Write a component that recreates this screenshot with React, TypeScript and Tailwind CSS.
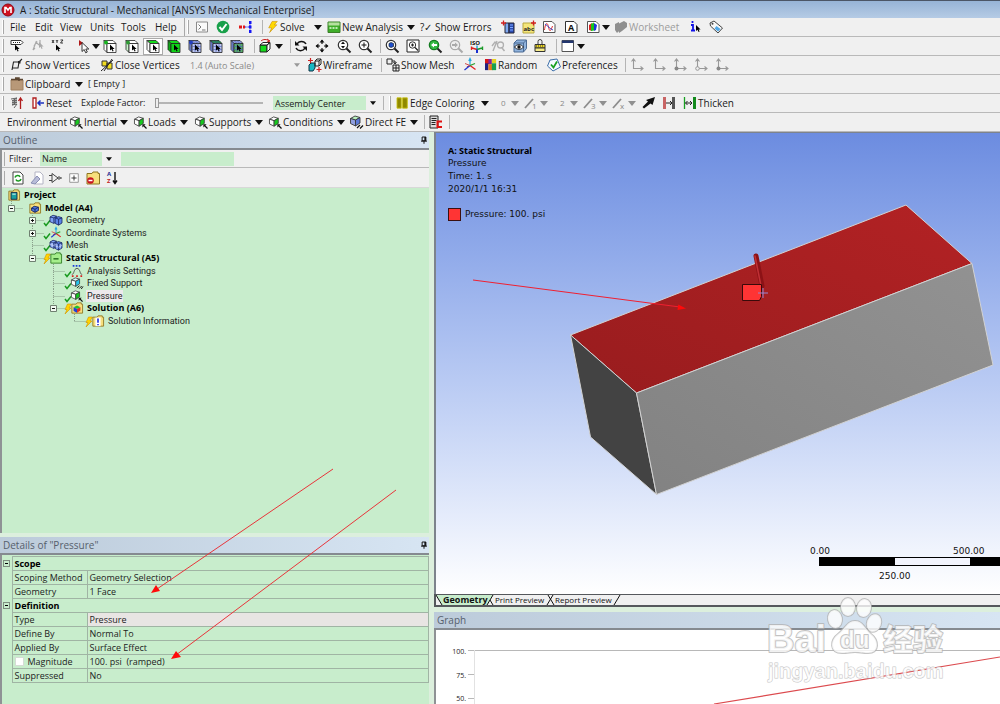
import React from 'react';

type IconProps = { children: React.ReactNode; className?: string };

function Icon({ children, className = 'h-3.5 w-3.5' }: IconProps) {
  return (
    <svg viewBox="0 0 14 14" className={`${className} shrink-0 overflow-visible`} fill="none" aria-hidden="true">
      {children}
    </svg>
  );
}

type BtnProps = { className: string; label?: string; children?: React.ReactNode };

function Btn({ className, label, children }: BtnProps) {
  return (
    <button type="button" aria-label={label} className={`flex h-4 shrink-0 items-center gap-px text-left ${className}`}>
      {children}
    </button>
  );
}

function Drop({ className = 'w-[15px]', gray = false }: { className?: string; gray?: boolean }) {
  return (
    <button type="button" aria-label="More options" className={`flex h-4 shrink-0 items-center pl-0.5 ${className}`}>
      <svg viewBox="0 0 8 5" className="h-[5px] w-2" aria-hidden="true">
        <path d="M0 0h8L4 5z" fill={gray ? '#909090' : '#111'} />
      </svg>
    </button>
  );
}

function Grip() {
  return (
    <div className="flex w-2.5 shrink-0 pl-0.5">
      <div className="h-3.5 w-0.5 border-r border-[#a8a8a8] bg-white" />
    </div>
  );
}

function Sep({ className = 'w-2.5' }: { className?: string }) {
  return (
    <div className={`flex shrink-0 justify-center ${className}`}>
      <div className="h-3.5 w-px bg-[#b4b4b4]" />
    </div>
  );
}

function Bar({ children }: { children: React.ReactNode }) {
  return (
    <div className="flex h-[19px] shrink-0 items-center overflow-hidden border-b border-[#b9b9b9] bg-[#f0f0f0] whitespace-nowrap">
      {children}
    </div>
  );
}

/* ---------- icons ---------- */

const Cursor = ({ x = 6, y = 5, fill = '#000' }) => (
  <path transform={`translate(${x} ${y})`} d="M0 0v6l1.500-1.200L2.600 7l1-.5L2.600 4.400h2z" fill={fill} />
);

const Bolt = ({ className }: { className?: string }) => (
  <Icon className={className}>
    <path d="M6 .5h6L8.500 4.500h3L3 13.500 5.500 8H2z" fill="#ffd900" stroke="#c98d00" strokeWidth=".7" />
  </Icon>
);

type SelectCubeProps = { top?: string; front?: string; side?: string; dot?: string; mesh?: boolean };

function SelectCube({ top = '#fff', front = '#fff', side = '#fff', dot, mesh = false }: SelectCubeProps) {
  return (
    <Icon>
      <g stroke="#222" strokeWidth=".8">
        <path d="M1 1.500h9l3 3H4z" fill={top} />
        <path d="M1 1.500l3 3v9l-3-3z" fill={side} />
        <path d="M4 4.500h9v9H4z" fill={front} />
      </g>
      {mesh && (
        <path d="M4 7.500h9M4 10.500h9M7 4.500v9M10 4.500v9M2.500 3v9M2.500 3h9M4 1.500l3 3M7 1.500l3 3" stroke="#4a5cb0" strokeWidth=".6" />
      )}
      {dot && <circle cx="3" cy="3.500" r="2" fill={dot} />}
      <Cursor x={7} y={5.500} />
    </Icon>
  );
}

const IsoCube = ({ left = '#fff', right = '#16c81e', top = '#fff', stroke = '#3a3a3a' }) => (
  <g stroke={stroke} strokeWidth=".9" strokeLinejoin="round">
    <path d="M.500 3.500L5 1l5 1.500-4.500 2.500z" fill={top} />
    <path d="M.500 3.500l5 1.500v6l-5-2.500z" fill={left} />
    <path d="M5.500 5L10 2.500V8l-4.500 3z" fill={right} />
  </g>
);

const LoadIcon = ({ className }: { className?: string }) => (
  <Icon className={className}>
    <IsoCube />
    <path d="M13.500 13.500L10.500 10.500" stroke="#111" strokeWidth="1.300" />
    <path d="M9 9h3.500L9 12.500z" fill="#111" />
  </Icon>
);

const FixedIcon = ({ className }: { className?: string }) => (
  <Icon className={className}>
    <IsoCube right="#28c4ee" top="#d6f4fc" />
    <path d="M7 13l3-3M9.500 13.500l3-3M12 14l2-3" stroke="#111" strokeWidth="1.100" />
  </Icon>
);

const Magnifier = ({ color = '#333', fill = '#fff', inner }: { color?: string; fill?: string; inner?: React.ReactNode }) => (
  <Icon>
    <path d="M9 9l4.500 4.500" stroke={color === '#aaa' ? '#aaa' : '#222'} strokeWidth="2" />
    <circle cx="6" cy="6" r="4.700" stroke={color} strokeWidth="1.200" fill={fill} />
    {inner}
  </Icon>
);

const Axes = ({ className }: { className?: string }) => (
  <Icon className={className}>
    <path d="M7 7.500V1M5.800 3L7 .5 8.200 3" stroke="#28a9e0" strokeWidth="1.200" />
    <path d="M7 7.500l5.500 4M7 7.500L4 9" stroke="#e02020" strokeWidth="1.300" />
    <path d="M7 7.500L1.500 12" stroke="#1f35d0" strokeWidth="1.300" />
    <path d="M7 7.500l5-2" stroke="#28a02c" strokeWidth="1.300" />
    <path d="M7 7.500L2 5.500" stroke="#d04a4a" />
  </Icon>
);

const Triad = ({ dot = false, ring = false }: { dot?: boolean; ring?: boolean }) => (
  <Icon>
    <path d="M3.500 1.500v9H13M1.500 3.500l2-2.500 2 2.500M10.500 8.500l2.500 2-2.500 2" stroke="#999" strokeWidth="1.100" />
    {dot && <circle cx="3.500" cy="10.500" r="2" fill="#888" />}
    {ring && <circle cx="3.500" cy="10.500" r="1.800" fill="#f0f0f0" stroke="#999" />}
  </Icon>
);

const EdgeStyle = ({ mark }: { mark: string }) => (
  <Icon>
    <path d="M1 12L9 3" stroke="#8c8c8c" strokeWidth="1.800" />
    <text x="8" y="13" fontSize="8" fill="#888">{mark}</text>
  </Icon>
);

type FolderProps = { children?: React.ReactNode; className?: string; fill?: string; stroke?: string };

const Folder = ({ children, className, fill = '#f7df7c', stroke = '#8d7420' }: FolderProps) => (
  <Icon className={className}>
    <path d="M1 2.500h5l1-1.500h5v1.500h1.500v10.500H1z" fill={fill} stroke={stroke} />
    {children}
  </Icon>
);

const MeshCubes = ({ className, mesh = false }: { className?: string; mesh?: boolean }) => (
  <Icon className={className}>
    <g stroke="#14205c" strokeWidth=".9">
      <path d="M0 3.500l3.500-2 4 1v6L4.500 11 0 9z" fill="#7ea2f4" />
      <path d="M0 3.500l4.500 1V11M4.500 4.500l3-2" />
      <path d="M6 4.500L10 3l4 1.500v6L10 13l-4-2z" fill="#5c84e8" />
      <path d="M6 4.500l4 1.500v7M10 6l4-1.500" />
      {mesh && <path d="M0 6.500l4.500 1 3-2M2.500 4v6M6 8l4 1.500 4-2M8 5.500v6M12 5.500v5.500" stroke="#dfe6ff" strokeWidth=".7" />}
    </g>
  </Icon>
);

const Pin = () => (
  <svg viewBox="0 0 8 10" className="h-2 w-1.5" aria-hidden="true">
    <path d="M1.500 1h5v5h-5zM0 6.500h8M4 6.500V10" fill="none" stroke="#111" strokeWidth="1.300" />
    <path d="M4.500 1H6.500v5H4.500z" fill="#111" />
  </svg>
);

/* ---------- toolbars ---------- */

function TopBars() {
  return (
    <header className="shrink-0 text-[10px] leading-4 text-[#1a1a1a]">
      <div className="flex h-[18px] items-center gap-1 border-t border-[#4c5666] bg-linear-to-b from-[#97b4d6] to-[#b5cbe5] pl-0.5 whitespace-nowrap">
        <Icon>
          <circle cx="6" cy="7" r="6" fill="#cf1020" stroke="#8d0a14" />
          <path d="M3 10V4.500h1L6 7l2-2.500h1V10" stroke="#fff" strokeWidth="1.600" />
        </Icon>
        <h1>A : Static Structural - Mechanical [ANSYS Mechanical Enterprise]</h1>
      </div>

      {/* Menu */}
      <Bar>
        <Grip />
        <Btn className="w-[25px]">File</Btn>
        <Btn className="w-[25px]">Edit</Btn>
        <Btn className="w-[30px]">View</Btn>
        <Btn className="w-[31px]">Units</Btn>
        <Btn className="w-[34px]">Tools</Btn>
        <Btn className="w-[29px]">Help</Btn>
        <div className="h-full w-px shrink-0 bg-[#a8a8a8]" />
        <Grip />
        <Btn className="w-[21px]" label="Console">
          <Icon>
            <path d="M1.500 2h11v10h-11z" fill="#fafafa" stroke="#8a8a8a" />
            <path d="M3.500 4.500L6 7 3.500 9.500M7 10h3.500" stroke="#777" />
          </Icon>
        </Btn>
        <Btn className="w-[22px]" label="Check">
          <Icon>
            <circle cx="7" cy="7" r="6.300" fill="#18a04a" />
            <path d="M3.500 7l2.500 3 4.500-6" stroke="#fff" strokeWidth="2" />
          </Icon>
        </Btn>
        <Btn className="w-[20px]" label="Connections">
          <Icon>
            <path d="M1 5.500h3v3H1zM5 5.500h2v3H5z" fill="#e01818" />
            <path d="M7 7h5M12 2v10" stroke="#1a1af0" strokeDasharray="1.500 1" />
            <path d="M11 1h2.500v3H11zM11 5.500h2.500v3H11zM11 10h2.500v3H11z" fill="#1717f5" />
          </Icon>
        </Btn>
        <Sep className="w-[9px]" />
        <Btn className="w-[45px]"><Bolt className="h-3 w-3" />Solve</Btn>
        <Drop />
        <Btn className="w-[78px]">
          <Icon>
            <path d="M1 2h12v10.500H1z" fill="#3fae2a" stroke="#3b7d28" />
            <path d="M1.500 2.500h11v3h-11z" fill="#b6e0a0" />
            <path d="M2.500 8h9" stroke="#e8ffe0" strokeWidth="1.500" strokeDasharray="2 1" />
          </Icon>
          New Analysis
        </Btn>
        <Drop />
        <Btn className="w-[81px]">?✓ Show Errors</Btn>
        <Btn className="w-[21px]" label="Section plane">
          <Icon>
            <path d="M4 3h4v10H4z" fill="#7ea8f0" stroke="#223" />
            <path d="M8 3h5v10H8z" fill="#2a4cb4" stroke="#223" />
            <path d="M9 5h3M9 7.500h3M9 10h3" stroke="#7fa8ff" />
            <path d="M0 3h5M2.500.500v5" stroke="#d02020" strokeWidth="1.300" />
          </Icon>
        </Btn>
        <Btn className="w-[20px]" label="Annotation">
          <Icon>
            <path d="M1 3h11v10H1z" fill="#f4e67a" stroke="#b8a840" />
            <text x="1.500" y="11" fontSize="6" fontWeight="700" fill="#222">abc</text>
            <path d="M9 3h5M11.500.500v5" stroke="#d02020" strokeWidth="1.300" />
          </Icon>
        </Btn>
        <Btn className="w-[22px]" label="Chart">
          <Icon>
            <path d="M1.500 1.500h8.500l3 3v8h-11.500z" fill="#fff" stroke="#555" />
            <path d="M2.500 10c1-8 3-8 4-3s2 5 4-1" stroke="#e03030" />
            <path d="M3 4c3 2 5 5 8 6" stroke="#3b4fd0" />
          </Icon>
        </Btn>
        <Btn className="w-[22px]" label="Comment">
          <Icon>
            <path d="M1.500 1.500h8.500l3 3v8h-11.500z" fill="#fff" stroke="#333" />
            <text x="4" y="11" fontSize="9" fontWeight="700" fill="#111">A</text>
          </Icon>
        </Btn>
        <Btn className="w-[14px]" label="Figure">
          <Icon>
            <path d="M1.500 1.500h8.500l3 3v8h-11.500z" fill="#fff" stroke="#555" />
            <path d="M3 5l3-2v8l-3-1z" fill="#e02020" />
            <path d="M5 4l3-1.500v8L5 11z" fill="#16c41c" />
            <path d="M8 3l3 2-1 5-2 1z" fill="#1c34d8" />
          </Icon>
        </Btn>
        <Drop className="w-[14px]" />
        <Btn className="w-[75px] text-[#9c9c9c]">
          <Icon>
            <path d="M1 4l4-2v9l-2 2-2-3zM4 4l6-3 3 2v4l-5 4-3 2z" fill="#8f8f8f" />
          </Icon>
          Worksheet
        </Btn>
        <Btn className="w-[20px]" label="Selection information">
          <Icon>
            <path d="M3.500 1v2M2 5h2v5M2 10.500h4" stroke="#1414e8" strokeWidth="1.800" />
            <Cursor x={7} y={5} />
          </Icon>
        </Btn>
        <Btn className="w-5" label="Tag">
          <Icon>
            <path d="M1 3l4-2 8.500 7-4.500 5L1.500 6z" fill="#f8f8f8" stroke="#444" />
            <path d="M7.500 6l4 3-2.500 2.500-3.500-3z" fill="#4fa8e8" />
            <circle cx="3.500" cy="3.700" r="1" fill="#444" />
          </Icon>
        </Btn>
      </Bar>

      {/* Selection and view */}
      <Bar>
        <Grip />
        <Btn className="w-[21px]" label="Select labels">
          <Icon>
            <path d="M1 1.500h10l2 2-2 2H1z" fill="#fff" stroke="#333" />
            <path d="M3 3.500h7" stroke="#222" strokeDasharray="1 1" />
            <Cursor x={5} y={5.500} />
          </Icon>
        </Btn>
        <Btn className="w-[20px]" label="Probe">
          <Icon>
            <path d="M2 11L5 3l3 3M2 11l2-2M6 2l-3 5M9 1v4" stroke="#aaa" strokeWidth="1.200" />
            <Cursor x={8} y={3} fill="#aaa" />
          </Icon>
        </Btn>
        <Btn className="w-[26px]" label="Pick coordinates">
          <Icon>
            <path d="M1 1l2 3M3 1L1 4M5 1l1 1.500L7 1M6 2.500V4M9.500 1h2.500l-2.500 3H12" stroke="#222" strokeWidth=".9" />
            <Cursor x={5} y={5.500} />
          </Icon>
        </Btn>
        <Btn className="w-[13px]" label="Select mode">
          <Icon>
            <path d="M2 1v6l4-3z" fill="#b01818" />
            <path d="M5 3.500v9l2.200-2 1.500 3.300 1.600-.8-1.500-3h3z" fill="#fff" stroke="#222" strokeWidth=".9" />
          </Icon>
        </Btn>
        <Drop className="w-[13px]" />
        <Btn className="w-[22px]" label="Vertex"><SelectCube dot="#17b31f" /></Btn>
        <Btn className="w-[18px]" label="Edge"><SelectCube side="#c9f5cb" dot="#2f9a34" /></Btn>
        <Btn className="mr-1 h-[17px] w-5 justify-center border border-[#aaa] bg-white" label="Face"><SelectCube top="#14dd1c" /></Btn>
        <Btn className="w-[21px]" label="Body"><SelectCube top="#14dd1c" front="#10d418" side="#10a818" /></Btn>
        <Btn className="w-[21px]" label="Node"><SelectCube mesh top="#a9b6ee" front="#bcc6f2" side="#8f9fe0" dot="#2440c0" /></Btn>
        <Btn className="w-[21px]" label="Element face"><SelectCube mesh top="#149a22" front="#bcc6f2" side="#8f9fe0" /></Btn>
        <Btn className="w-[20px]" label="Element"><SelectCube mesh top="#a9b6ee" front="#5aae6a" side="#8f9fe0" /></Btn>
        <Sep className="w-2" />
        <Btn className="w-[15px]" label="Extend">
          <Icon>
            <path d="M2 6h7v7H2z" fill="#14d81c" stroke="#222" />
            <path d="M2 6l3-2.500h7L9 6zM9 6l3-2.500V10l-3 3z" fill="#fff" stroke="#222" />
            <path d="M3 2c2-2 6-2 8 0M9 0l3 2-3 1" stroke="#c22" />
          </Icon>
        </Btn>
        <Drop className="w-[13px]" />
        <Sep className="w-2" />
        <Btn className="w-[21px]" label="Rotate">
          <Icon>
            <path d="M3 5C5 1.500 10 1.500 12 5M11 9C9 12.500 4 12.500 2 9" stroke="#111" strokeWidth="1.500" />
            <path d="M1 2v4.500h4.500zM13 12V7.500H8.500z" fill="#111" />
          </Icon>
        </Btn>
        <Btn className="w-[22px]" label="Pan">
          <Icon>
            <path d="M7 1v4M7 9v4M1 7h4M9 7h4" stroke="#111" strokeWidth="1.200" />
            <path d="M7 .500l2.500 3h-5zM7 13.500l2.500-3h-5zM.500 7l3-2.500v5zM13.500 7l-3-2.500v5z" fill="#111" />
          </Icon>
        </Btn>
        <Btn className="w-[21px]" label="Zoom"><Magnifier inner={<path d="M6 2.500l2 2.500H4zM6 9.500L8 7H4z" fill="#111" />} /></Btn>
        <Btn className="w-[17px]" label="Zoom in"><Magnifier inner={<path d="M3.500 6h5M6 3.500v5" stroke="#111" />} /></Btn>
        <Sep />
        <Btn className="w-[21px]" label="Zoom to fit"><Magnifier inner={<path d="M4 4.500l2-1 2.500 1v3l-2.500 1-2-1z" fill="#1f4fd0" stroke="#123" strokeWidth=".7" />} /></Btn>
        <Btn className="w-[22px]" label="Box zoom">
          <Icon>
            <path d="M1 1h12v12H1z" fill="#fff" stroke="#222" />
            <circle cx="6.500" cy="6" r="3.200" stroke="#333" />
            <path d="M9 8.500l3 3M6.500 4.500v3M5 6h3" stroke="#222" strokeWidth="1.200" />
          </Icon>
        </Btn>
        <Btn className="w-[21px]" label="Previous view"><Magnifier color="#127a1e" fill="#32b840" inner={<path d="M3 6l3-2.500v1.500h3v2H6v1.500z" fill="#fff" />} /></Btn>
        <Btn className="w-[21px]" label="Next view"><Magnifier color="#aaa" fill="#eee" inner={<path d="M9 6L6 3.500V5H3v2h3v1.500z" fill="#aaa" />} /></Btn>
        <Btn className="w-[21px]" label="Isometric view">
          <Icon>
            <text x="0" y="5.500" fontSize="6" fontWeight="700" fill="#111">ISO</text>
            <path d="M7 6.500v4" stroke="#28a9e0" strokeWidth="1.500" />
            <path d="M7 10.500L2 9M1.500 7.500v3.500" stroke="#d22" strokeWidth="1.400" />
            <path d="M7 10.500L12 9M12.500 7.500v3.500" stroke="#1a9a28" strokeWidth="1.400" />
            <path d="M7 10.500v3.500" stroke="#1b2fd0" strokeWidth="2" />
          </Icon>
        </Btn>
        <Btn className="w-[22px]" label="Rescale">
          <Icon>
            <path d="M2 12L6 2M1 7l3-4 2 2" stroke="#b0b0b0" strokeWidth="1.400" />
            <circle cx="9.500" cy="6" r="3" stroke="#b0b0b0" strokeWidth="1.300" />
            <path d="M11 9l2.500 3" stroke="#b0b0b0" strokeWidth="1.500" />
          </Icon>
        </Btn>
        <Btn className="w-[21px]" label="Look at">
          <Icon>
            <path d="M1 4l3-3h9.500v8.500L10.500 13H1z" fill="#8fb2dc" stroke="#4b6b94" />
            <path d="M1 4h9.500v9M10.500 4l3-3" stroke="#4b6b94" />
            <path d="M1.500 8c2-3 7-3 9 0-2 3-7 3-9 0z" fill="#fff" stroke="#222" />
            <circle cx="6" cy="8" r="1.700" fill="#111" />
          </Icon>
        </Btn>
        <Btn className="w-[17px]" label="Manage views">
          <Icon>
            <path d="M4 5V2.500a2 2 0 014 0V5" stroke="#444" />
            <path d="M1 5.500h10V9H1z" fill="#f0da20" stroke="#333" />
            <path d="M1 9h10v3.500H1z" fill="#f7ec8a" stroke="#333" />
            <path d="M2 7h8" stroke="#333" strokeDasharray="1 1" />
          </Icon>
        </Btn>
        <Sep />
        <Btn className="w-[14px]" label="Viewports">
          <Icon>
            <path d="M1 1.500h11.500v11H1z" fill="#fff" stroke="#555" />
            <path d="M1 1.500h11.500V4H1z" fill="#23366e" />
          </Icon>
        </Btn>
        <Drop />
      </Bar>

      {/* Graphics options */}
      <Bar>
        <Grip />
        <Btn className="w-[90px]">
          <Icon>
            <path d="M2 12l1.500-8H9l-1 6H2.500M9 4l3-3" stroke="#222" strokeWidth="1.100" />
            <path d="M8 3h2.500v2.500H8z" fill="#222" />
          </Icon>
          Show Vertices
        </Btn>
        <Btn className="w-[88px]">
          <Icon>
            <path d="M2 3h5v5H2zM7 5h5v6H7z" fill="#f2dd20" stroke="#333" />
            <path d="M1 13L13 2M4 13L12 1" stroke="#222" />
          </Icon>
          Close Vertices
        </Btn>
        <div className="relative mr-2 w-[112px] shrink-0">
          <select aria-label="Vertex scale" disabled className="h-4 w-full appearance-none pl-0.5 text-[9px] text-[#8a8a8a] opacity-100">
            <option>1.4 (Auto Scale)</option>
          </select>
          <svg viewBox="0 0 8 5" className="pointer-events-none absolute top-1.5 right-0 h-1 w-1.5" aria-hidden="true">
            <path d="M0 0h8L4 5z" fill="#999" />
          </svg>
        </div>
        <Btn className="w-[69px]">
          <Icon>
            <path d="M1 7l2-2h4v5l-2 3H1z" fill="#19b8c4" stroke="#134" />
            <path d="M7 3l2-2h4v5l-2 2H7zM7 3h4v5M11 3l2-2" stroke="#222" />
            <path d="M0 2.500h5M2.500 0v5M8.500 11.500h5M11 9v5" stroke="#d02020" strokeWidth="1.200" />
          </Icon>
          Wireframe
        </Btn>
        <Sep className="w-[9px]" />
        <Btn className="w-[77px]">
          <Icon>
            <path d="M1 1h5v5H1zM7 7h6v6H7zM7 10h6M10 7v6" stroke="#222" />
            <path d="M6 3h3v2.500M7.500 4L9 6l1.500-2" stroke="#222" />
          </Icon>
          Show Mesh
        </Btn>
        <Btn className="w-[22px]" label="Show coordinate systems"><Axes /></Btn>
        <Btn className="w-[62px]">
          <Icon className="h-3 w-3">
            <path d="M0 0h5v6H0z" fill="#d81818" />
            <path d="M4 0h4v6H4z" fill="#8020a0" />
            <path d="M8 0h5v5H8z" fill="#e6d020" />
            <path d="M0 5h4v8H0z" fill="#202080" />
            <path d="M4 6h5v7H4z" fill="#e87818" />
            <path d="M8 5h5v8H8z" fill="#18a050" />
          </Icon>
          Random
        </Btn>
        <Btn className="w-[74px]">
          <Icon>
            <path d="M3 2l7-1 3.500 8-7.500 4L0.500 8z" fill="#f4f9ff" stroke="#3c6ea8" />
            <path d="M4 6.500l2.500 3L10 3.500" stroke="#18a020" strokeWidth="1.800" />
          </Icon>
          Preferences
        </Btn>
        <Sep className="w-[9px]" />
        <Btn className="w-[22px]" label="Triad 1"><Triad /></Btn>
        <Btn className="w-[21px]" label="Triad 2"><Triad /></Btn>
        <Btn className="w-[21px]" label="Triad 3"><Triad dot /></Btn>
        <Btn className="w-[21px]" label="Triad 4"><Triad ring /></Btn>
        <Btn className="w-[21px]" label="Triad 5"><Triad dot /></Btn>
      </Bar>

      <Bar>
        <Grip />
        <Btn className="w-[63px]">
          <Icon>
            <path d="M1 3h12v10H1z" fill="#b89878" stroke="#a08060" />
            <path d="M1 2.500h12M5 1h4v3" stroke="#5c4632" strokeWidth="1.500" />
          </Icon>
          Clipboard
        </Btn>
        <Drop />
        <span className="text-[9px]">[ Empty ]</span>
      </Bar>

      {/* Explode and edges */}
      <Bar>
        <Grip />
        <Btn className="w-[21px]" label="Explode">
          <Icon>
            <path d="M1 3l6-1-5 3 5-1-5 3 5-1-5 3 5-1-3 4" stroke="#555" strokeWidth=".9" />
            <path d="M10.500 13V3M8.500 5l2-3 2 3" stroke="#b01c1c" strokeWidth="1.300" />
          </Icon>
        </Btn>
        <Btn className="w-[50px]">
          <Icon>
            <path d="M2 2h3v10H2z" fill="#fff" stroke="#b01c1c" strokeWidth="1.300" />
            <path d="M13 7H7M9.500 4.500L7 7l2.500 2.500" stroke="#1c30c0" strokeWidth="1.500" />
          </Icon>
          Reset
        </Btn>
        <label htmlFor="explode" className="w-[74px] shrink-0 text-[9px]">Explode Factor:</label>
        <input
          id="explode"
          type="range"
          defaultValue={0}
          className="mr-2.5 h-3 w-[108px] shrink-0 appearance-none bg-linear-to-b from-transparent from-40% via-[#8a8a8a] via-50% to-transparent to-60% [&::-webkit-slider-thumb]:h-2.5 [&::-webkit-slider-thumb]:w-1 [&::-webkit-slider-thumb]:appearance-none [&::-webkit-slider-thumb]:border [&::-webkit-slider-thumb]:border-[#999] [&::-webkit-slider-thumb]:bg-[#eee]"
        />
        <div className="relative flex w-[107px] shrink-0 items-center">
          <select aria-label="Explode center" className="h-3.5 w-[93px] appearance-none bg-[#c8edcc] pl-0.5 text-[9px]">
            <option>Assembly Center</option>
          </select>
          <svg viewBox="0 0 8 5" className="pointer-events-none ml-1 h-1 w-1.5" aria-hidden="true">
            <path d="M0 0h8L4 5z" fill="#111" />
          </svg>
        </div>
        <Sep className="w-[7px]" />
        <Grip />
        <Btn className="w-[82px]">
          <Icon className="h-3 w-3">
            <path d="M0 1h5v12H0zM6.500 1H12v12H6.500z" fill="#8f8800" stroke="#c9c210" />
          </Icon>
          Edge Coloring
        </Btn>
        <Drop className="w-[22px]" />
        <span className="w-2 text-[8px] text-[#888]">0</span>
        <Drop gray />
        <Btn className="w-[14px]" label="Edge style 1"><EdgeStyle mark="1" /></Btn>
        <Drop gray className="w-[22px]" />
        <span className="w-2 text-[8px] text-[#888]">2</span>
        <Drop gray />
        <Btn className="w-[14px]" label="Edge style 3"><EdgeStyle mark="3" /></Btn>
        <Drop gray />
        <Btn className="w-[14px]" label="Edge style x"><EdgeStyle mark="x" /></Btn>
        <Drop gray />
        <Btn className="w-[21px]" label="Direction">
          <Icon><path d="M14 1l-2.500 8-2-1.500L3 12.500 1.500 11 7 5.500 5 4z" fill="#111" /></Icon>
        </Btn>
        <Btn className="w-[21px]" label="Edge joints">
          <Icon>
            <path d="M1 1h3v12H1z" fill="#c86464" />
            <path d="M10 1h3v12h-3z" fill="#555" />
            <path d="M4 7h6M8 5l2 2-2 2" stroke="#222" />
          </Icon>
        </Btn>
        <Btn className="w-[56px]">
          <Icon>
            <path d="M1.500 1v12" stroke="#18a020" strokeWidth="1.300" />
            <path d="M10 1h3v12h-3z" fill="#128a1c" />
            <path d="M2.500 7H9M4.500 5l-2 2 2 2M7 5l2 2-2 2" stroke="#222" />
          </Icon>
          Thicken
        </Btn>
      </Bar>

      {/* Environment */}
      <Bar>
        <span className="w-[70px] shrink-0 pl-[7px]">Environment</span>
        <Btn className="w-[48px]"><LoadIcon className="h-[13px] w-[13px]" />Inertial</Btn>
        <Drop className="w-[16px]" />
        <Btn className="w-[44px]"><LoadIcon className="h-[13px] w-[13px]" />Loads</Btn>
        <Drop className="w-[17px]" />
        <Btn className="w-[58px]"><LoadIcon className="h-[13px] w-[13px]" />Supports</Btn>
        <Drop className="w-[16px]" />
        <Btn className="w-[66px]"><LoadIcon className="h-[13px] w-[13px]" />Conditions</Btn>
        <Drop />
        <Btn className="w-[58px]">
          <Icon>
            <IsoCube left="#8f9fe0" right="#5a78d8" top="#b9f0c0" />
            <path d="M7 13l3-3M10 13.500l3-3" stroke="#111" strokeWidth="1.200" />
          </Icon>
          Direct FE
        </Btn>
        <Drop className="w-[11px]" />
        <Sep />
        <Btn className="w-[16px]" label="Commands">
          <Icon>
            <path d="M1 1h8v12H1z" fill="#ddd" stroke="#222" />
            <path d="M2.500 3.500h5M2.500 5.500h5M2.500 7.500h4M2.500 9.500h4" stroke="#222" />
            <path d="M13 6.500H8.500v5.500H13" stroke="#e01010" strokeWidth="2" />
          </Icon>
        </Btn>
        <Sep className="w-2" />
      </Bar>
    </header>
  );
}

/* ---------- outline ---------- */

type TreeRow = {
  label: string;
  level: number;
  icon: React.ReactNode;
  bold?: boolean;
  selected?: boolean;
  expander?: 'plus' | 'minus';
  mark?: 'check' | 'bolt';
  last?: boolean;
};

const treeIcon = 'h-3 w-3';

const tree: TreeRow[] = [
  {
    label: 'Project', level: 0, bold: true,
    icon: <Folder className={treeIcon}><path d="M3.500 4h7v8h-7z" fill="#1aa0a0" stroke="#124" /><path d="M5 6h4" stroke="#fff" /></Folder>,
  },
  {
    label: 'Model (A4)', level: 1, bold: true, expander: 'minus', last: true,
    icon: <Folder className={treeIcon}><path d="M3 7l3-2 5 1v4l-4 2-4-2z" fill="#4e7ae0" stroke="#14205c" /><path d="M3 7l4 1.500V12M7 8.500L11 6" stroke="#14205c" /></Folder>,
  },
  { label: 'Geometry', level: 2, expander: 'plus', mark: 'check', icon: <MeshCubes className={treeIcon} /> },
  { label: 'Coordinate Systems', level: 2, expander: 'plus', mark: 'check', icon: <Axes className={treeIcon} /> },
  { label: 'Mesh', level: 2, mark: 'check', icon: <MeshCubes mesh className={treeIcon} /> },
  {
    label: 'Static Structural (A5)', level: 2, bold: true, expander: 'minus', mark: 'bolt', last: true,
    icon: <Folder className={treeIcon} fill="#a5ee8c" stroke="#2c7a20"><path d="M4 8h6" stroke="#145c10" strokeWidth="1.500" /></Folder>,
  },
  {
    label: 'Analysis Settings', level: 3, mark: 'check',
    icon: (
      <Icon className={treeIcon}>
        <path d="M1 11c3 0 2-7 6-7s3 7 6 7" stroke="#444" />
        <path d="M2 1h10" stroke="#1c3cd8" strokeWidth="2" strokeDasharray="2 1.500" />
        <path d="M1 13h12" stroke="#d82020" strokeWidth="2" strokeDasharray="2 3" />
      </Icon>
    ),
  },
  { label: 'Fixed Support', level: 3, mark: 'check', icon: <FixedIcon className={treeIcon} /> },
  { label: 'Pressure', level: 3, mark: 'check', selected: true, icon: <LoadIcon className={treeIcon} /> },
  {
    label: 'Solution (A6)', level: 3, bold: true, expander: 'minus', mark: 'bolt', last: true,
    icon: <Folder className={treeIcon}><path d="M3 6l4 2v4.500l-4-2z" fill="#2040d8" /><path d="M7 8l4-2v4l-4 2.500z" fill="#e03020" /><path d="M3 6l4-2 4 2-4 2z" fill="#20c030" /></Folder>,
  },
  {
    label: 'Solution Information', level: 4, mark: 'bolt', last: true,
    icon: <Folder className={treeIcon}><path d="M4 3h6v10H4z" fill="#fff" /><path d="M7 4v5M7 10.500v1.500" stroke="#1420d8" strokeWidth="1.800" /></Folder>,
  },
];

const indents = ['', '', 'pl-[21px]', 'pl-[42px]', 'pl-[63px]'];

function TreeItem({ row }: { row: TreeRow }) {
  return (
    <li className={`flex flex-1 items-center ${indents[row.level]}`}>
      {row.level > 0 && (
        <svg viewBox="0 0 21 12" className="h-3 w-[21px] shrink-0 overflow-visible" fill="none" aria-hidden="true">
          <path d="M3.500 6.500H15" stroke="#8aa08c" strokeDasharray="1 1" />
          <path d={row.last ? 'M3.500 -1V6' : 'M3.500 -1V13'} stroke="#8aa08c" strokeDasharray="1 1" />
          {row.expander && <path d="M.500 3.500h6v6h-6z" fill="#f2fbf2" stroke="#6f7f70" />}
          {row.expander && <path d={row.expander === 'plus' ? 'M2 6.500h3M3.500 5v3' : 'M2 6.500h3'} stroke="#111" />}
          {row.mark === 'check' && <path d="M15 9l2 2.500 4-5" stroke="#1a9a20" strokeWidth="1.500" />}
          {row.mark === 'bolt' && <path d="M17.500 2h4l-2.500 4h2l-6 6 2-4.500h-2z" fill="#ffd400" stroke="#d09000" strokeWidth=".6" />}
        </svg>
      )}
      {row.icon}
      <span
        className={`ml-[3px] px-px leading-3 ${row.bold ? 'font-bold text-black' : "font-['Roboto','Liberation_Sans',sans-serif]"} ${row.selected ? 'bg-[#ece9ec]' : ''}`}
      >
        {row.label}
      </span>
    </li>
  );
}

function PanelHeader({ title, pin = false }: { title: string; pin?: boolean }) {
  return (
    <div className="flex h-[18px] shrink-0 items-center justify-between border-b-2 border-[#858a90] bg-linear-to-r from-[#bccbda] to-[#d7e5f3] pr-0.5 pl-[3px] text-[10px] text-[#56606c]">
      <h2>{title}</h2>
      {pin && <button type="button" aria-label="Pin panel"><Pin /></button>}
    </div>
  );
}

function Outline() {
  return (
    <section className="flex min-h-0 flex-1 flex-col">
      <PanelHeader title="Outline" pin />
      <div className="flex min-h-0 flex-1 flex-col border-l-2 border-[#8f9295] bg-[#c8edcc] text-[9px] text-[#222]">
        <div className="flex h-[18px] shrink-0 items-center border-b border-[#b9b9b9] bg-[#f0f0f0]">
          <div className="ml-0.5 h-3.5 w-px bg-[#aaa]" />
          <label htmlFor="filter" className="w-[35px] pl-1">Filter:</label>
          <div className="mr-[5px] flex w-[76px] items-center">
            <select id="filter" className="h-3.5 w-[62px] appearance-none bg-[#c8edcc] pl-0.5">
              <option>Name</option>
            </select>
            <svg viewBox="0 0 8 5" className="pointer-events-none ml-1 h-1 w-1.5" aria-hidden="true">
              <path d="M0 0h8L4 5z" fill="#111" />
            </svg>
          </div>
          <input aria-label="Filter text" type="text" className="h-3.5 w-[113px] bg-[#c8edcc] px-1" />
        </div>
        <div className="flex h-5 shrink-0 items-center border-b border-[#d8d8d8] bg-[#f0f0f0]">
          <div className="mr-1.5 ml-0.5 h-3.5 w-px bg-[#aaa]" />
          <Btn className="w-[19px]" label="Refresh">
            <Icon>
              <path d="M2 1h7l3 3v9H2z" fill="#fff" stroke="#444" />
              <path d="M4 6.500C4.500 4 8.500 4 9 6M10 8C9.500 10.500 5.500 10.500 5 8.500" stroke="#1a9a20" strokeWidth="1.500" />
            </Icon>
          </Btn>
          <Btn className="w-[18px]" label="Clear">
            <Icon>
              <path d="M5 1h5l3 3v9H5z" fill="#fff" stroke="#b4b4c4" />
              <path d="M1 12l6-7 3 3-5 5z" fill="#b8bcd8" stroke="#8a8fb4" />
            </Icon>
          </Btn>
          <Btn className="w-[20px]" label="Connectors">
            <Icon>
              <path d="M4 2.500v9L10 7zM1 4.500h3M1 9.500h3M12 7h2" stroke="#444" />
              <circle cx="11" cy="7" r="1.200" stroke="#444" />
            </Icon>
          </Btn>
          <Btn className="w-[18px]" label="Expand all">
            <Icon className="h-3 w-3">
              <path d="M2 2h10v10H2z" fill="#fff" stroke="#888" />
              <path d="M4 7h6M7 4v6" stroke="#222" />
            </Icon>
          </Btn>
          <Btn className="w-[21px]" label="Hide folder">
            <Folder>
              <circle cx="4.500" cy="9.500" r="3.300" fill="#c81420" />
              <path d="M2.500 9.500h4" stroke="#fff" strokeWidth="1.500" />
            </Folder>
          </Btn>
          <Btn className="w-4" label="Sort">
            <span className="flex flex-col text-[6px] leading-[7px] font-bold">
              <span className="text-[#1c2c90]">A</span>
              <span className="text-[#c01c1c]">Z</span>
            </span>
            <svg viewBox="0 0 6 14" className="h-3.5 w-1.5" fill="none" aria-hidden="true">
              <path d="M3 1v11M1 9.500l2 3 2-3" stroke="#111" strokeWidth="1.400" />
            </svg>
          </Btn>
        </div>
        <ul className="flex h-[139px] shrink-0 flex-col pt-px pl-1.5 whitespace-nowrap">
          {tree.map((row) => (
            <TreeItem key={row.label} row={row} />
          ))}
        </ul>
      </div>
    </section>
  );
}

/* ---------- details ---------- */

const details = [
  { group: 'Scope', rows: [['Scoping Method', 'Geometry Selection'], ['Geometry', '1 Face']] },
  {
    group: 'Definition',
    rows: [['Type', 'Pressure'], ['Define By', 'Normal To'], ['Applied By', 'Surface Effect'], ['Magnitude', '100. psi  (ramped)'], ['Suppressed', 'No']],
  },
];

function Details() {
  return (
    <section className="flex h-[167px] shrink-0 flex-col">
      <PanelHeader title={'Details of "Pressure"'} pin />
      <div className="min-h-0 flex-1 border-l-2 border-[#8f9295] bg-[#c8edcc] pt-px">
        <table className="w-full table-fixed border-collapse text-[9px] leading-[13px] whitespace-pre text-[#1c1c1c]">
          <colgroup>
            <col className="w-2.5" />
            <col className="w-[75px]" />
            <col />
          </colgroup>
          {details.map(({ group, rows }) => (
            <tbody key={group}>
              <tr className="h-[14px]">
                <td className="p-0">
                  <button type="button" aria-label={`Collapse ${group}`} className="ml-px flex h-[7px] w-[7px] items-center justify-center border border-[#7f8f80]">
                    <span className="h-px w-[3px] bg-black" />
                  </button>
                </td>
                <th colSpan={2} className="border border-[#a0b4a4] py-0 pl-0.5 text-left font-bold text-black">{group}</th>
              </tr>
              {rows.map(([name, value]) => (
                <tr key={name} className="h-[14px]">
                  <td className="p-0" />
                  <td className="border border-[#a0b4a4] py-0 pl-0.5">
                    {name === 'Magnitude' ? (
                      <label className="flex items-center gap-1">
                        <input type="checkbox" className="h-[9px] w-[9px] appearance-none border border-[#d5dcd5] bg-white" />
                        {name}
                      </label>
                    ) : name}
                  </td>
                  <td className={`border border-[#a0b4a4] py-0 pl-0.5 ${value === 'Pressure' ? 'bg-[#e8e5e3]' : ''}`}>{value}</td>
                </tr>
              ))}
            </tbody>
          ))}
        </table>
      </div>
    </section>
  );
}

/* ---------- graphics view ---------- */

function GeometryView() {
  return (
    <div className="relative min-h-0 flex-1 overflow-hidden border-t border-l-2 border-[#7d838c] bg-linear-to-b from-[#6c8ce0] to-white font-['DejaVu_Sans','Noto_Sans',sans-serif] text-[9px] text-[#111]">
      <svg viewBox="436 133 564 461" preserveAspectRatio="xMinYMin slice" className="absolute inset-0 h-full w-full" fill="none" aria-label="Loaded block">
        <defs>
          <linearGradient id="topFace" x1="0" y1="1" x2="1" y2="0">
            <stop offset="0" stopColor="#981c1e" />
            <stop offset="1" stopColor="#b32224" />
          </linearGradient>
          <linearGradient id="frontFace" x1="0" y1="1" x2="1" y2="0">
            <stop offset="0" stopColor="#828282" />
            <stop offset="1" stopColor="#929292" />
          </linearGradient>
        </defs>
        <g stroke="#d2d2d2" strokeWidth="1" strokeLinejoin="round">
          <path d="M570.500 335L906 205 972 263.500 636.500 393z" fill="url(#topFace)" />
          <path d="M570.500 335L636.500 393 656.500 494.500 590.500 437z" fill="#434343" />
          <path d="M636.500 393L972 263.500 993 365 656.500 494.500z" fill="url(#frontFace)" />
        </g>
        <path d="M756 256l6 30" stroke="#8c1216" strokeWidth="5" strokeLinecap="round" />
        <path d="M755 256l6 30" stroke="#c03035" strokeWidth="1.500" strokeLinecap="round" />
        <path d="M742.500 284.500h19v12l-2 4h-17z" fill="#ff3434" stroke="#3a0a0a" />
        <path d="M758 293h10M763 288v10" stroke="#9a86d0" />
        <path d="M473 280L680 307" stroke="#f02030" />
        <path d="M686 308.500l-8.500 1.500.8-5.500z" fill="#ff0a0a" />
      </svg>

      <div className="relative px-3 pt-[11px] leading-[13px]">
        <p className="font-['Noto_Sans',sans-serif] font-bold text-black">A: Static Structural</p>
        <p>Pressure</p>
        <p>Time: 1. s</p>
        <p>2020/1/1 16:31</p>
        <p className="mt-3 flex items-center gap-1">
          <span className="h-[13px] w-[13px] border border-[#3a1010] bg-[#ff3434]" />
          Pressure: 100. psi
        </p>
      </div>

      {/* Scale ruler */}
      <div className="absolute right-[-120px] bottom-3 w-[310px] leading-3">
        <div className="flex">
          <span className="w-[143px]">0.00</span>
          <span>500.00</span>
        </div>
        <div className="ml-[9px] flex h-[9px] border border-black bg-black">
          <div className="w-[75px]" />
          <div className="w-[75px] bg-[#f2f4fd]" />
        </div>
        <div className="mt-1 pl-[69px]">250.00</div>
      </div>
    </div>
  );
}

function ViewTabs() {
  return (
    <nav className="flex h-[13px] shrink-0 border-t border-b-2 border-l-2 border-[#55585c] bg-[#f0f0f0] text-[8px] leading-[10px] text-[#111]">
      <div className="relative w-[190px]">
        <svg viewBox="0 0 190 10" className="absolute inset-0 h-full w-full" fill="none" aria-hidden="true">
          <path d="M0 0H57L51 10H6z" fill="#c8edcc" />
          <path d="M0 0L6 10M57 0L51 10M54 5L57 10M112 0L118 10M117 0L111 10M184 0L178 10" stroke="#111" />
        </svg>
        <div className="relative flex pl-[7px]">
          <button type="button" className="w-[52px] text-left text-[9px] font-bold">Geometry</button>
          <button type="button" className="w-[60px] text-left">Print Preview</button>
          <button type="button" className="text-left">Report Preview</button>
        </div>
      </div>
    </nav>
  );
}

function Graph() {
  return (
    <section className="flex h-[92px] shrink-0 flex-col">
      <PanelHeader title="Graph" />
      <div className="min-h-0 flex-1 border-l-2 border-[#8f9295] bg-white">
        <svg viewBox="436 630 564 74" preserveAspectRatio="xMinYMin slice" className="h-full w-full" fill="none" aria-label="Pressure over time">
          <path d="M468 650.500H1000M468 674.500h6M468 698.500h6" stroke="#b8b8b8" />
          <path d="M474.500 650V704" stroke="#e2e2e2" />
          <path d="M714 704L1000 657" stroke="#dc4a4e" strokeWidth="1.200" />
          <g fontSize="7" fill="#222" textAnchor="end">
            <text x="466" y="654">100.</text>
            <text x="466" y="678">75.</text>
            <text x="466" y="701">50.</text>
          </g>
        </svg>
      </div>
    </section>
  );
}

function Watermark() {
  return (
    <svg viewBox="0 0 184 94" className="pointer-events-none absolute right-[50px] bottom-[16px] h-[94px] w-[184px]" aria-label="Baidu">
      <g fill="#fff" fillOpacity=".8" stroke="#b0b0b0" strokeOpacity=".75" strokeWidth="2" strokeLinejoin="round" paintOrder="stroke">
        <ellipse cx="69" cy="25" rx="7" ry="9" transform="rotate(-10 69 25)" />
        <ellipse cx="82" cy="13" rx="7" ry="9" />
        <ellipse cx="98" cy="14" rx="7" ry="9" transform="rotate(10 98 14)" />
        <ellipse cx="108" cy="29" rx="7" ry="9" transform="rotate(20 108 29)" />
        <path d="M89 27c8 0 10 8 16 13 8 6 9 19-3 19-6 0-8-1-13-1s-7 1-13 1c-13 0-12-13-4-19 7-5 9-13 17-13z" />
        <g fontWeight="700" fontFamily="'Liberation Sans','Noto Sans CJK SC',sans-serif">
          <text x="1" y="58" fontSize="38">Bai</text>
          <text x="74" y="54" fontSize="24">du</text>
          <text x="117" y="56" fontSize="30">经验</text>
        </g>
        <text x="2" y="84" fontSize="20" fontWeight="700" fontFamily="'Liberation Sans',sans-serif" strokeWidth="1">jingyan.baidu.com</text>
      </g>
    </svg>
  );
}

export default function App() {
  return (
    <div className="relative flex h-screen flex-col overflow-hidden bg-[#dcefdd] font-['Open_Sans','Noto_Sans',sans-serif]">
      <TopBars />
      <main className="flex min-h-0 flex-1">
        <div className="flex w-[429px] shrink-0 flex-col gap-1">
          <Outline />
          <Details />
        </div>
        <div className="ml-[5px] flex min-w-0 flex-1 flex-col">
          <GeometryView />
          <ViewTabs />
          <div className="h-[5px] shrink-0" />
          <Graph />
        </div>
      </main>

      {/* Callout arrows over the details panel */}
      <svg viewBox="0 0 260 210" className="pointer-events-none absolute bottom-[34px] left-[145px] h-[210px] w-[260px]" fill="none" aria-hidden="true">
        <path d="M188 9L12 129M251 30L31 195" stroke="#e8343a" />
        <path d="M6 133l5-8 4 6zM26 199l5-8 5 6z" fill="#ff0a0a" />
      </svg>
      <Watermark />
    </div>
  );
}
